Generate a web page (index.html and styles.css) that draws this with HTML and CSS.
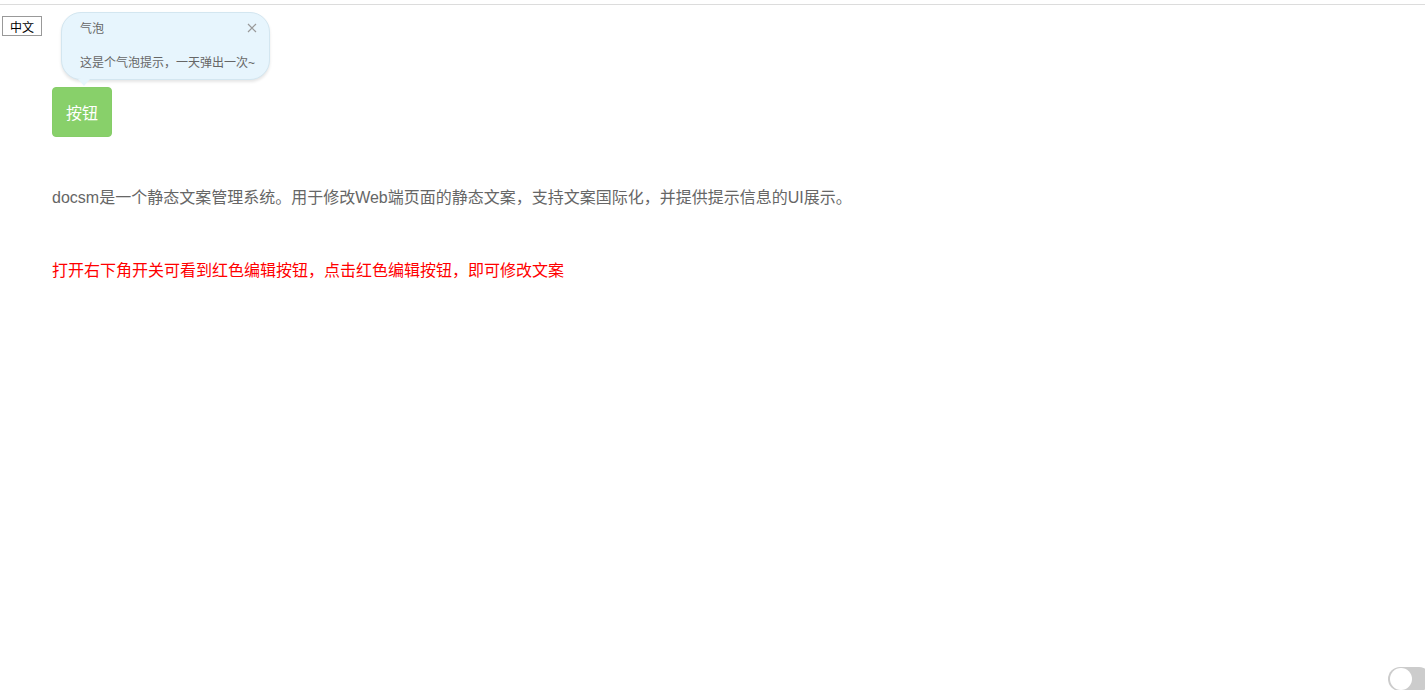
FILE: index.html
```html
<!DOCTYPE html>
<html lang="zh-CN">
<head>
  <meta charset="UTF-8">
  <meta name="viewport" content="width=device-width, initial-scale=1.0">
  <title>docsm</title>
  <link rel="stylesheet" href="styles.css">
</head>
<body>
  <div class="top-line"></div>
  <button class="lang-btn">中文</button>

  <div class="main">
    <div class="btn-wrap">
      <div class="bubble">
        <div class="bubble-head">
          <span class="bubble-title">气泡</span>
          <svg class="bubble-close" width="10" height="10" viewBox="0 0 10 10">
            <path d="M1 1 L9 9 M9 1 L1 9" stroke="#999" stroke-width="1.2" fill="none"/>
          </svg>
        </div>
        <p class="bubble-text">这是个气泡提示，一天弹出一次~</p>
        <span class="bubble-arrow"></span>
      </div>
      <button class="green-btn">按钮</button>
    </div>

    <p class="desc">docsm是一个静态文案管理系统。用于修改Web端页面的静态文案，支持文案国际化，并提供提示信息的UI展示。</p>
    <p class="tip">打开右下角开关可看到红色编辑按钮，点击红色编辑按钮，即可修改文案</p>
  </div>

  <div class="switch"><span class="knob"></span></div>
</body>
</html>
```

FILE: styles.css
```css
body {
  margin: 0;
  padding: 0;
  background: #fff;
  font-family: "Liberation Sans", "Noto Sans CJK SC", sans-serif;
}
.top-line {
  height: 4px;
  border-bottom: 1px solid #dcdcdc;
}
.lang-btn {
  display: block;
  margin: 11px 0 0 2px;
  height: 20px;
  width: 40px;
  padding: 0;
  font-size: 12px;
  font-family: "Liberation Sans", "Noto Sans CJK SC", sans-serif;
  color: #000;
  background: #fff;
  border: 1px solid #999;
  border-radius: 0;
}
.main {
  padding-left: 52px;
}
.btn-wrap {
  position: relative;
  width: 60px;
  margin-top: 51px;
}
.green-btn {
  display: block;
  width: 60px;
  height: 50px;
  background: #88d06a;
  color: #fff;
  font-size: 16px;
  font-family: "Liberation Sans", "Noto Sans CJK SC", sans-serif;
  border: 1px solid #86cd68;
  border-radius: 4px;
  padding: 0;
}
.bubble {
  position: absolute;
  left: 9px;
  bottom: 57px;
  width: 207px;
  height: 66px;
  background: #e7f5fd;
  border: 1px solid #d3e6f0;
  border-radius: 20px;
  box-shadow: 0 2px 3px rgba(0, 0, 0, 0.1);
  box-sizing: content-box;
}
.bubble-head {
  display: flex;
  justify-content: space-between;
  align-items: center;
  padding: 6px 12px 0 18px;
}
.bubble-title {
  font-size: 12px;
  color: #666;
}
.bubble-text {
  margin: 17px 0 0 18px;
  font-size: 12px;
  color: #666;
}
.bubble-arrow {
  position: absolute;
  left: 16px;
  bottom: -7px;
  width: 0;
  height: 0;
  border-left: 6px solid transparent;
  border-right: 6px solid transparent;
  border-top: 7px solid #e7f5fd;
}
.desc {
  margin: 50px 0 0;
  font-size: 16px;
  line-height: 22px;
  color: #666;
}
.tip {
  margin: 51px 0 0;
  font-size: 16px;
  line-height: 22px;
  color: #f00;
}
.switch {
  position: fixed;
  right: -6px;
  bottom: -1px;
  width: 43px;
  height: 24px;
  background: #ccc;
  border-radius: 12px;
}
.knob {
  position: absolute;
  left: 2px;
  top: 1px;
  width: 22px;
  height: 22px;
  background: #fff;
  border-radius: 50%;
}
```
